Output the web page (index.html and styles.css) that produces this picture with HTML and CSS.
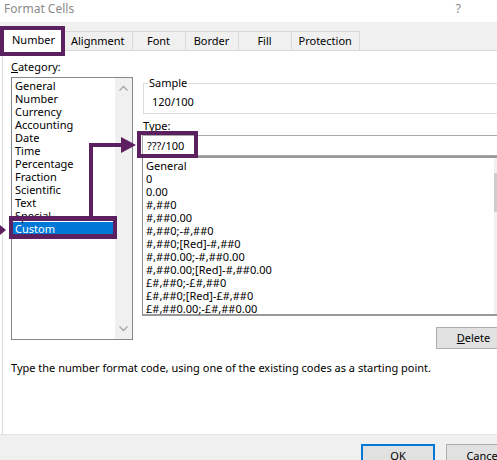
FILE: index.html
```html
<!DOCTYPE html>
<html>
<head>
<meta charset="utf-8">
<title>Format Cells</title>
<link rel="stylesheet" href="styles.css">
</head>
<body>
<div class="dialog">
  <div class="titlebar"><span class="title">Format Cells</span><span class="help">?</span></div>
  <div class="tabbar">
    <div class="tab active">Number</div>
    <div class="tab">Alignment</div>
    <div class="tab">Font</div>
    <div class="tab">Border</div>
    <div class="tab">Fill</div>
    <div class="tab">Protection</div>
  </div>
  <div class="panel">
    <div class="cols">
      <div class="leftcol">
        <div class="label"><u>C</u>ategory:</div>
        <div class="catlist">
          <ul class="items">
            <li>General</li>
            <li>Number</li>
            <li>Currency</li>
            <li>Accounting</li>
            <li>Date</li>
            <li>Time</li>
            <li>Percentage</li>
            <li>Fraction</li>
            <li>Scientific</li>
            <li>Text</li>
            <li>Special</li>
            <li class="selected">Custom</li>
          </ul>
          <div class="vscroll">
            <svg class="chev" width="17" height="17" viewBox="0 0 17 17"><path d="M4.5 10.5 L8.5 6.5 L12.5 10.5" fill="none" stroke="#a6a6a6" stroke-width="1.3"/></svg>
            <svg class="chev" width="17" height="17" viewBox="0 0 17 17"><path d="M4.5 6.5 L8.5 10.5 L12.5 6.5" fill="none" stroke="#a6a6a6" stroke-width="1.3"/></svg>
          </div>
        </div>
      </div>
      <div class="rightcol">
        <fieldset class="sample">
          <legend>Sample</legend>
          <div class="sample-val">120/100</div>
        </fieldset>
        <div class="label type-label">Type:</div>
        <div class="type-input">???/100</div>
        <div class="fmtlist">
          <ul class="items fmt-items">
            <li>General</li>
            <li>0</li>
            <li>0.00</li>
            <li>#,##0</li>
            <li>#,##0.00</li>
            <li>#,##0;-#,##0</li>
            <li>#,##0;[Red]-#,##0</li>
            <li>#,##0.00;-#,##0.00</li>
            <li>#,##0.00;[Red]-#,##0.00</li>
            <li>£#,##0;-£#,##0</li>
            <li>£#,##0;[Red]-£#,##0</li>
            <li>£#,##0.00;-£#,##0.00</li>
          </ul>
          <div class="vscroll2"><div class="thumb"></div></div>
        </div>
        <div class="btnrow"><button class="btn delete"><u>D</u>elete</button></div>
      </div>
    </div>
    <p class="desc">Type the number format code, using one of the existing codes as a starting point.</p>
  </div>
  <div class="footer">
    <button class="btn ok">OK</button>
    <button class="btn">Cancel</button>
  </div>

  <div class="hl hl-tab"></div>
  <div class="hl hl-type"></div>
  <div class="hl hl-custom"></div>
  <svg class="arrows" width="200" height="250" viewBox="0 0 200 250">
    <polyline points="91,216 91,145 124,145" fill="none" stroke="#5c2060" stroke-width="4"/>
    <polygon points="121,137 136,145 121,153" fill="#5c2060"/>
    <polygon points="0,225 6,230 0,235" fill="#5c2060"/>
  </svg>
</div>
</body>
</html>
```

FILE: styles.css
```css
* { box-sizing: border-box; margin: 0; padding: 0; }
html, body { width: 497px; height: 460px; overflow: hidden; background: #fff; }
body { font-family: "Noto Sans", "Open Sans", sans-serif; font-size: 11px; color: #000; }
ul { list-style: none; }
u { text-decoration: underline; text-underline-offset: 1px; }

.dialog { position: relative; width: 530px; height: 470px; display: flex; flex-direction: column; }

.titlebar { height: 22px; display: flex; justify-content: space-between; align-items: flex-start; padding: 2px 69px 0 4px; line-height: 14px; font-size: 12px; color: #8a8a8a; }

.tabbar { height: 28px; background: #f0f0f0; display: flex; align-items: flex-end; padding-left: 3px; }
.tab { height: 19px; line-height: 17px; border: 1px solid #d9d9d9; border-bottom: none; margin-left: -1px; padding: 0 7px; min-width: 54px; text-align: center; background: #f0f0f0; }
.tab.active { position: relative; z-index: 1; height: 23px; line-height: 21px; margin-bottom: -1px; background: #fff; margin-left: 0; padding: 0 8px; }

.panel { flex: none; height: 384px; border-top: 1px solid #d9d9d9; border-left: 1px solid #d9d9d9; margin-left: 2px; padding: 9px 0 0 8px; background: #fff; }
.cols { display: flex; gap: 9px; align-items: flex-start; }
.leftcol { width: 122px; }
.label { line-height: 14px; }
.catlist { margin-top: 3px; height: 263px; border: 1px solid #828790; display: flex; }
.items { flex: 1; padding-top: 1px; }
.items li { line-height: 13px; padding-left: 3px; white-space: nowrap; }
.catlist .items li.selected { background: #0078d7; color: #fff; margin-left: 1px; padding-left: 2px; }
.vscroll { width: 17px; background: #f0f0f0; display: flex; flex-direction: column; justify-content: space-between; padding: 2px 0; }
.chev { display: block; }

.rightcol { width: 370px; }
.sample { margin: 17px 0 0 1px; border: 1px solid #dcdcdc; height: 37px; padding: 6px 0 0 8px; }
.sample legend { margin-left: -4px; padding: 0 1px; line-height: 12px; }
.sample-val { line-height: 13px; }
.type-label { margin-top: 5px; margin-left: 1px; }
.type-input { margin-top: 2px; height: 21px; line-height: 19px; border: 1px solid #a8a8a8; padding-left: 4px; }
.fmtlist { height: 160px; border: 1px solid #8c8c8c; border-top: 2px solid #999; border-bottom: 2px solid #999; display: flex; }
.fmt-items li { padding-left: 3px; }
.vscroll2 { width: 17px; background: #f0f0f0; padding-top: 15px; }
.thumb { width: 100%; height: 39px; background: #cdcdcd; }
.btnrow { display: flex; justify-content: flex-end; margin-top: 11px; padding-right: 1px; }

.btn { font: inherit; color: #000; width: 75px; height: 22px; line-height: 20px; background: #e1e1e1; border: 1px solid #adadad; text-align: center; }
.btn.ok { border: 2px solid #0078d7; width: 74px; }

.desc { margin-top: 12px; line-height: 14px; }

.footer { flex: 1; background: #f0f0f0; border-top: 1px solid #e3e3e3; display: flex; justify-content: flex-end; gap: 11px; padding: 9px 9px 0 0; }
.footer .btn { height: 23px; }

.hl { position: absolute; border: 4px solid #5c2060; z-index: 2; }
.hl-tab { left: 0; top: 26px; width: 65px; height: 30px; }
.hl-type { left: 137px; top: 131px; width: 61px; height: 27px; }
.hl-custom { left: 9px; top: 216px; width: 108px; height: 23px; border-width: 5px 4px; }
.arrows { position: absolute; left: 0; top: 0; z-index: 2; }
```
